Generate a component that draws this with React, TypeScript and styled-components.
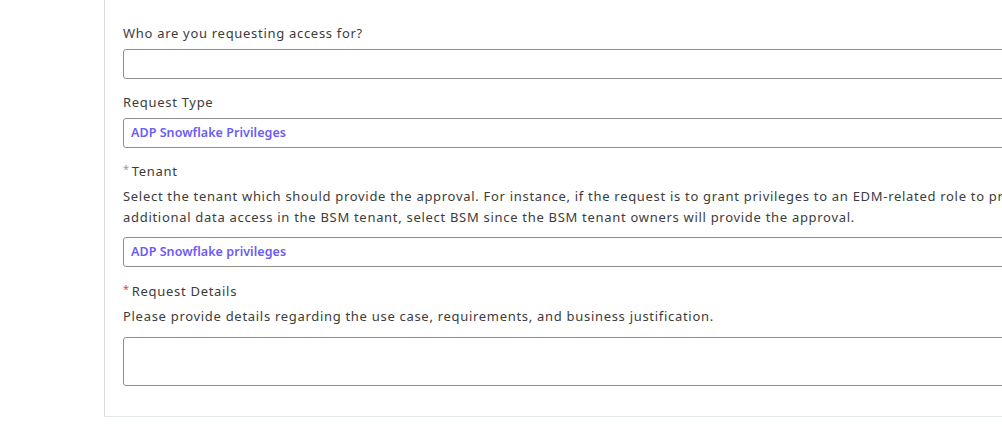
import React from "react";
import styled, { createGlobalStyle } from "styled-components";

const Global = createGlobalStyle`
  html, body { margin: 0; padding: 0; background: #fff; overflow: hidden; }
  body { font-family: "Noto Sans", "Open Sans", sans-serif; color: #3c3c3c; }
`;

const Layout = styled.div`
  display: flex;
  width: 1002px;
  height: 424px;
  overflow: hidden;
`;

const Gutter = styled.div`
  flex: 0 0 104px;
`;

const Panel = styled.div`
  flex: 0 0 1100px;
  height: 417px;
  box-sizing: border-box;
  border-left: 1px solid #dcdcdc;
  border-bottom: 1px solid #e2e8e8;
  padding: 23px 0 0 18px;
`;

const Field = styled.div<{ $gap?: number }>`
  display: flex;
  flex-direction: column;
  margin-bottom: ${(p) => p.$gap ?? 13}px;
`;

const Label = styled.label`
  font-size: 13px;
  line-height: 20px;
  height: 20px;
  letter-spacing: 0.7px;
  color: #3c3c3c;
`;

const Star = styled.span<{ $red?: boolean }>`
  display: inline-block;
  line-height: 1;
  color: ${(p) => (p.$red ? "#e8425a" : "#9a9a9a")};
  font-size: 11px;
  margin-right: 2px;
  transform: translateY(-3px);
`;

const Help = styled.p<{ $top?: number }>`
  margin: ${(p) => p.$top ?? 5}px 0 0;
  font-size: 13px;
  line-height: 21px;
  letter-spacing: 0.7px;
  color: #3c3c3c;
  white-space: nowrap;
`;

const Box = styled.div<{ $h?: number; $top?: number }>`
  box-sizing: border-box;
  height: ${(p) => p.$h ?? 30}px;
  margin-top: ${(p) => p.$top ?? 6}px;
  border: 1px solid #8f8f8f;
  border-radius: 3px;
  padding: 0 7px 2px;
  display: flex;
  align-items: center;
`;

const Value = styled.span`
  font-size: 12.5px;
  font-weight: 600;
  color: #6b5cf6;
  letter-spacing: 0.05px;
`;

export default function App() {
  return (
    <>
      <Global />
      <Layout>
        <Gutter />
        <Panel>
          <Field>
            <Label>Who are you requesting access for?</Label>
            <Box />
          </Field>
          <Field>
            <Label>Request Type</Label>
            <Box>
              <Value>ADP Snowflake Privileges</Value>
            </Box>
          </Field>
          <Field $gap={14}>
            <Label>
              <Star>*</Star>Tenant
            </Label>
            <Help>
              Select the tenant which should provide the approval. For instance, if the request is to grant privileges to an EDM-related role to provide
              <br />
              additional data access in the BSM tenant, select BSM since the BSM tenant owners will provide the approval.
            </Help>
            <Box $top={9}>
              <Value>ADP Snowflake privileges</Value>
            </Box>
          </Field>
          <Field>
            <Label>
              <Star $red>*</Star>Request Details
            </Label>
            <Help $top={5}>Please provide details regarding the use case, requirements, and business justification.</Help>
            <Box $h={49} $top={10} />
          </Field>
        </Panel>
      </Layout>
    </>
  );
}
